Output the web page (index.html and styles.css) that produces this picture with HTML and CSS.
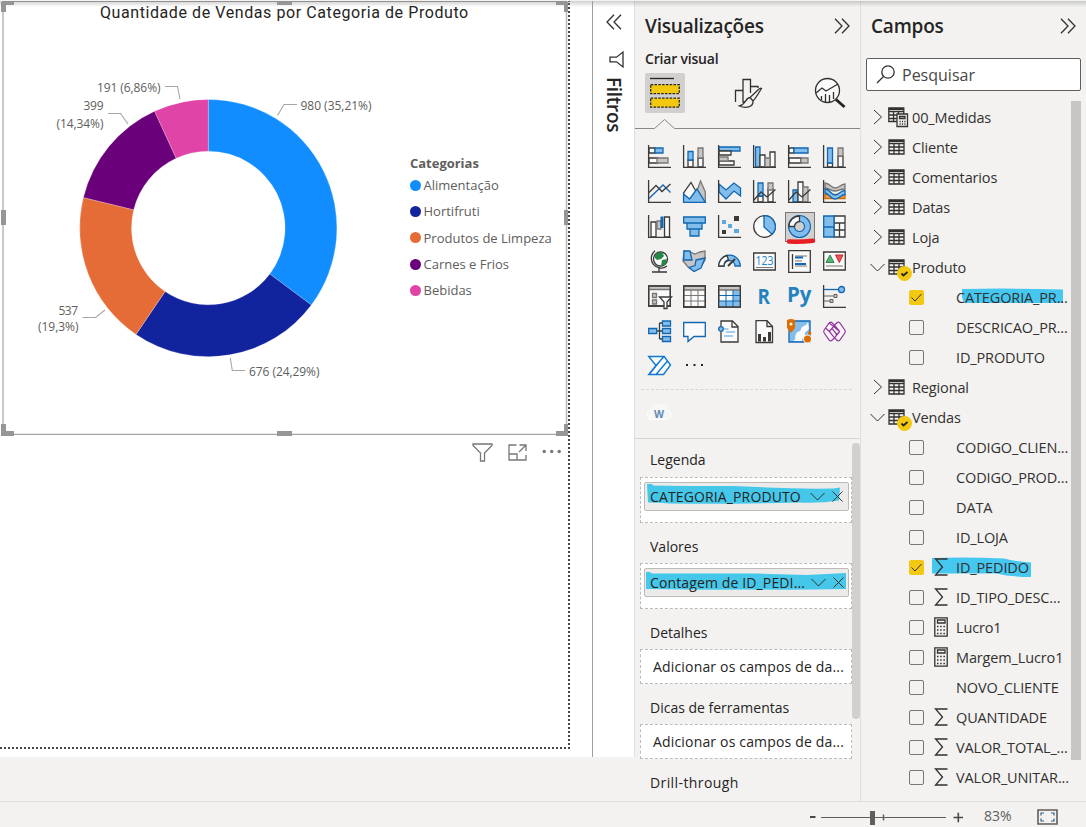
FILE: index.html
```html
<!DOCTYPE html>
<html lang="pt-BR">
<head>
<meta charset="utf-8">
<title>Quantidade de Vendas por Categoria de Produto</title>
<link rel="stylesheet" href="styles.css">
</head>
<body>
<svg class="sprite" aria-hidden="true">
  <symbol id="right" viewBox="0 0 10 16"><path d="M1 1l7.500 7L1 15" class="thin"/></symbol>
  <symbol id="down" viewBox="0 0 15 9"><path d="M.5 1l7 7 7-7" class="thin"/></symbol>
  <symbol id="close" viewBox="0 0 11 11"><path d="M.5.5l10 10M10.500.5l-10 10" class="thin"/></symbol>
  <symbol id="dbl" viewBox="0 0 16 16"><path d="M1 .7l7 7.300-7 7.300M8 .7l7 7.300-7 7.300" class="mid"/></symbol>
  <symbol id="table" viewBox="0 0 17 16"><path d="M1 1h15v14H1zM1 4.500h15M1 8h15M1 11.500h15M6 4.500V15M11 4.500V15" class="mid"/><path d="M1 2h15" class="heavy"/></symbol>
  <symbol id="sigma" viewBox="0 0 14 18"><path d="M13.500 1H1.500l7 8-7 8h12" class="mid"/></symbol>
  <symbol id="calc" viewBox="0 0 14 20"><path d="M.8.8h12.400v18.400H.8zM3.500 3h7.500v3h-7.500z" class="mid"/><path d="M3 9.500h8.500M3 13h8.500M3 16.500h8.500" class="mid" stroke-dasharray="1.500 1.700"/></symbol>
  <symbol id="check" viewBox="0 0 15 15"><path d="M2.500 7.500l3.500 3.500 6.500-7" class="thin"/></symbol>
</svg>

<div class="app">
  <main class="canvas">
    <section class="page">
      <article class="visual">
        <h1 class="visual-title">Quantidade de Vendas por Categoria de Produto</h1>
        <svg class="donut" viewBox="0 24 400 400" width="400" height="400">
          <g stroke="#fff" stroke-opacity=".45" stroke-width=".5">
          <path fill="#118dff" d="M208.300 99.400A128.600 128.600 0 0 1 311.300 305L269.800 274A76.800 76.800 0 0 0 208.300 151.200z"/>
          <path fill="#12239e" d="M311.300 305A128.600 128.600 0 0 1 136 334.400L165.100 291.500A76.800 76.800 0 0 0 269.800 274z"/>
          <path fill="#e66c37" d="M136 334.400A128.600 128.600 0 0 1 83.400 197.600L133.700 209.800A76.800 76.800 0 0 0 165.100 291.500z"/>
          <path fill="#6b007b" d="M83.400 197.600A128.600 128.600 0 0 1 154.600 111.200L176.200 158.200A76.800 76.800 0 0 0 133.700 209.800z"/>
          <path fill="#e044a7" d="M154.600 111.200A128.600 128.600 0 0 1 208.300 99.400V151.200A76.800 76.800 0 0 0 176.200 158.200z"/>
          </g>
          <path class="leader" d="M165 86.500h12.500L180 99M108 113.500h12.500l7.500 10.500M277.500 115.500l6.500-11h13M82.500 317.500h13l9.500-7.500M230.300 358l2 12.500H245"/>
          <g class="data-label">
            <text x="97" y="92" textLength="63.500">191 (6,86%)</text>
            <text x="83.500" y="110" textLength="20">399</text>
            <text x="56.500" y="127.500" textLength="47">(14,34%)</text>
            <text x="300.500" y="110" textLength="71">980 (35,21%)</text>
            <text x="58.500" y="315" textLength="19.500">537</text>
            <text x="38" y="331" textLength="40.500">(19,3%)</text>
            <text x="249" y="376" textLength="70.500">676 (24,29%)</text>
          </g>
        </svg>
        <div class="legend">
          <h2>Categorias</h2>
          <ul>
            <li><i class="c1"></i><span>Alimentação</span></li>
            <li><i class="c2"></i><span>Hortifruti</span></li>
            <li><i class="c3"></i><span>Produtos de Limpeza</span></li>
            <li><i class="c4"></i><span>Carnes e Frios</span></li>
            <li><i class="c5"></i><span>Bebidas</span></li>
          </ul>
        </div>
        <svg class="handles" viewBox="0 0 570 437" width="570" height="437"><path d="M3 1.500V434M566.500 1.500V434" stroke="#b8b8b8" stroke-width="1.500"/><path d="M2 1.500h565M2 434.300h565" stroke="#8f8f8f"/><path fill="#969696" d="M1 2h13v3H6v7H1zM277 2h15v3h-15zM556 2h12v10h-4V5h-8zM1 210h5v15H1zM564 210h4v15h-4zM1 424h5v7h8v5H1zM277 431h15v5h-15zM568 424h-4v7h-8v5h12z"/></svg>
      </article>
      <div class="visual-tools">
        <svg width="21" height="19" viewBox="0 0 21 19"><path d="M1 1h19v1.500l-7.500 7.500v8h-4v-8L1 2.500z"/></svg>
        <svg width="19" height="17" viewBox="0 0 19 17"><path d="M8.500 1H1v15h17v-5M18 7V1h-6.500M18 1l-7 7M1 10h8v6"/></svg>
        <svg class="more" width="20" height="5" viewBox="0 0 20 5"><g fill="#797775" stroke="none"><circle cx="2.200" cy="2.500" r="1.700"/><circle cx="9.700" cy="2.500" r="1.700"/><circle cx="17.200" cy="2.500" r="1.700"/></g></svg>
      </div>
    </section>
  </main>

  <aside class="filters">
    <svg class="flip" width="16" height="16"><use href="#dbl"/></svg>
    <svg class="funnel" width="15" height="17" viewBox="0 0 15 17"><path d="M14 1v15L7.500 10.800H1V6.200h6.500z" class="mid"/></svg>
    <span>Filtros</span>
  </aside>

  <aside class="vis">
    <header><h2>Visualizações</h2><svg width="16" height="16"><use href="#dbl"/></svg></header>
    <h3>Criar visual</h3>
    <div class="tabs">
      <div class="tab active"><svg width="40" height="40" viewBox="0 0 40 40"><path d="M5 5.500h24" stroke="#252423" stroke-width="1.300"/><g fill="#f2c811" stroke="#252423" stroke-width="1.300" stroke-dasharray="2.500 1.300"><path d="M5.700 11.700h28.600v9H5.700zM5.700 25.200h28.600v9H5.700z"/></g></svg></div>
      <div class="tab"><svg width="40" height="40" viewBox="0 0 40 40"><g class="mid"><path d="M8.500 29V17.500H16M23.500 20V6.500H16V29h3M23.500 13.500h7.500v1.500"/><path fill="#f3f2f1" d="M34.500 15.500q-1-1-3 1L23 24.500l3 3.500q1.500-1 8.500-12.500zM23 24.500c-4.500 0-4 7-10.500 8.500 6 2.500 14 1.500 13.500-5z"/></g></svg></div>
      <div class="tab"><svg width="40" height="40" viewBox="0 0 40 40"><g class="mid"><circle cx="18.500" cy="17.500" r="12" fill="#fafafa"/><path d="M7 20l6-5 4 3L29 11M12.500 23v4M16.500 21v8M20.500 22v7M24.500 19v7"/></g><path d="M27 26.500l8.500 7.500" stroke="#252423" stroke-width="3"/></svg></div>
    </div>
    <svg class="notch" width="225" height="10" viewBox="0 0 225 10"><path d="M0 9.500h19.500l10-9 10 9H225"/></svg>

    <div class="gallery">
      <svg viewBox="0 0 23 23"><path class="w" d="M1 3h6v5H1zM1 13h9v5H1z"/><path class="b" d="M7 3h8v5H7z"/><path class="g" d="M9 13h11v5H9z"/><path class="ax" d="M.6 0v22.400H23"/></svg>
      <svg viewBox="0 0 23 23"><path class="w" d="M5 15h5v7H5zM15 13h5v9h-5z"/><path class="b" d="M5 6.500h5V15H5z"/><path class="g" d="M15 3h5v10h-5z"/><path class="ax" d="M.6 0v22.400H23"/></svg>
      <svg viewBox="0 0 23 23"><path class="b" d="M1 2h21v4H1z"/><path class="w" d="M1 6h12v4H1zM1 16h15v4H1z"/><path class="g" d="M1 12h9v4H1z"/><path class="ax" d="M.6 0v22.400H23"/></svg>
      <svg viewBox="0 0 23 23"><path class="b" d="M2.500 2H7v20H2.500z"/><path class="w" d="M7 10h5v12H7zM17 7h5v15h-5z"/><path class="g" d="M12 13h5v9h-5z"/><path class="ax" d="M.6 0v22.400H23"/></svg>
      <svg viewBox="0 0 23 23"><path class="w" d="M1 3h5v5H1zM1 13h12v5H1z"/><path class="b" d="M6 3h14v5H6z"/><path class="g" d="M13 13h7v5h-7z"/><path class="ax" d="M.6 0v22.400H23"/></svg>
      <svg viewBox="0 0 23 23"><path class="w" d="M4.500 18h5v4h-5zM15 11h5v11h-5z"/><path class="b" d="M4.500 3h5v15h-5z"/><path class="g" d="M15 3h5v8h-5z"/><path class="ax" d="M.6 0v22.400H23"/></svg>

      <svg viewBox="0 0 23 23"><path class="bl" d="M1 18.500L15 5l7.500 7.500"/><path class="kl" d="M1 12.500l7-7 6 6 8.500-7.500"/><path class="ax" d="M.6 0v22.400H23"/></svg>
      <svg viewBox="0 0 23 23"><path class="g" d="M17.500 1L22.300 12v10H10z"/><path class="w" d="M8 2.500l11 19.500H.6V13z"/><path class="b" d="M.6 14l6 5L14 9l8.300 13.300H.6z"/></svg>
      <svg viewBox="0 0 23 23"><path class="b" d="M1 4l7 6 8-7 6.500 5v8L16 11l-8 8-7-7z"/><path class="ax" d="M.6 0v22.400H23"/></svg>
      <svg viewBox="0 0 23 23"><path class="w" d="M5 16h5v6H5zM15 9h5v13h-5z"/><path class="b" d="M5 3h5v13H5z"/><path class="g" d="M15 3h5v7h-5z"/><path class="kl" d="M1 20l7-8 6 5 8.500-7.500"/><path class="ax" d="M.6 0v22.400H23"/></svg>
      <svg viewBox="0 0 23 23"><path class="b" d="M5 10h5v12H5z"/><path class="w" d="M10 2h5v20h-5z"/><path class="g" d="M15 7h5v15h-5z"/><path class="kl" d="M1 20l7-8 6 5 8.500-7.500"/><path class="ax" d="M.6 0v22.400H23"/></svg>
      <svg viewBox="0 0 23 23"><path class="g" d="M2 3c6 1 6 5 10 5s4-3 10-4v5c-6 0-6 2-10 2S8 9 2 8z"/><path fill="#f7a04a" stroke="#d06a00" stroke-width="1.300" d="M2 14.500h20V18.500H2z"/><path class="b" d="M2 9c5 0 6 6 10 6s5-4.500 10-4.500v4c-4 0-5 4.500-10 4.500S6 13 2 13z"/><path class="ax" d="M.6 0v22.400H23"/></svg>

      <svg viewBox="0 0 23 23"><path class="w" d="M3 7h5v15H3zM16.500 2h5v20h-5z"/><path class="g" d="M9 6h4v8H9z"/><path fill="#1167b1" d="M12.500 1.500h3V13h-3z"/><path class="ax" d="M.6 0v22.400H23"/></svg>
      <svg viewBox="0 0 23 23"><path class="b" d="M.7 2h21.600v6H.7zM4 8h15v6H4zM7 14h9v7H7z"/></svg>
      <svg viewBox="0 0 23 23"><path fill="#3b3a39" d="M16 1h5v5h-5zM4 15h4v4H4z"/><path fill="#61a8df" d="M4 5h4v4H4zM10 9h4v4h-4zM16 14h5v4h-5z"/><path class="ax" d="M.6 0v22.400H23"/></svg>
      <svg viewBox="0 0 23 23"><circle class="w" cx="11.500" cy="11.500" r="10.800"/><path class="b" d="M11 .7a10.800 10.800 0 0 1 8 18.500L11 12z"/></svg>
      <div class="selected"><svg viewBox="0 0 23 23"><circle cx="11.500" cy="11.500" r="8" fill="none" stroke="#1167b1" stroke-width="7"/><circle cx="11.500" cy="11.500" r="8" fill="none" stroke="#83bdec" stroke-width="4.800"/><path d="M1 11.500A10.500 10.500 0 0 1 11.500 1v5.500a5 5 0 0 0-5 5z" class="w"/></svg><svg class="scribble" width="30" height="6" viewBox="0 0 30 6"><path d="M3 3.500q12 .5 24-.7" stroke="#e81c23" stroke-width="4.500" stroke-linecap="round" fill="none"/></svg></div>
      <svg viewBox="0 0 23 23"><path class="w" d="M11 1h11v21H11zM11 8h11M16.500 8v14M11 15h5.500M16.500 15H22"/><path class="b" d="M.7 1H11v11H.7zM.7 12H11v10H.7z"/></svg>

      <svg viewBox="0 0 23 23"><circle class="w" cx="12.500" cy="9" r="7"/><path fill="#238b45" d="M9 3l5-1 2 4-3 3-4 1-3-3zM14 10l5-1-2 6-4 1z"/><path class="kl" d="M7 .8A9.500 9.500 0 1 0 19 16M11 18v4M4 22h15"/></svg>
      <svg viewBox="0 0 23 23"><path class="g" d="M1 1l6 1 5 2 5-2 5-1v9l-5 8-6 3-6-4-5-6z"/><path class="b" d="M1 1h6l2 9H.7zM13 10l9-2-4 10-7 3.500-5-4 6-2z"/></svg>
      <svg viewBox="0 0 23 23"><path class="b" d="M.7 16a10.800 10.800 0 0 1 21.600 0H17a5.500 5.500 0 0 0-11 0z"/><path class="w" d="M.7 16A10.800 10.800 0 0 1 9 5.500L10.500 10Q6 11 6 16z"/><path d="M10 16l7-7" stroke="#3b3a39" stroke-width="2"/></svg>
      <svg viewBox="0 0 23 23"><path class="w" d="M.7 3h21.600v17H.7z"/><path stroke="#797775" d="M3 17.500h17"/><text x="2.500" y="14.500" textLength="18" lengthAdjust="spacingAndGlyphs" class="digits">123</text></svg>
      <svg viewBox="0 0 23 23"><path class="w" d="M.7.7h21.600v21.600H.7z"/><path class="kl" d="M4.500 4v15"/><path stroke="#797775" d="M7 6h12M7 11h7M7 16h12"/><path stroke="#1167b1" stroke-width="2" d="M7 7.500h8M7 14h11"/></svg>
      <svg viewBox="0 0 23 23"><path class="w" d="M.7 2h21.600v18H.7z"/><path fill="#5bb174" stroke="#238b45" d="M3 12.500l4-7.500 4 7.500z"/><path fill="#e85555" stroke="#c9252d" d="M12.500 5H20l-3.700 7.500z"/><path stroke="#797775" d="M3 16h17"/></svg>

      <svg viewBox="0 0 23 23"><path class="w" d="M.7 1h21.600v20H.7z"/><path class="g" d="M.7 1h21.600v3.500H.7zM4.500 8.500h4v4h-4zM4.500 15h4v4h-4z"/><path class="kl" d="M.7 1h21.600v20H.7z"/><path class="w" d="M11.500 12h12l-4.500 5v6.500h-3V17z"/></svg>
      <svg viewBox="0 0 23 23"><path class="w" d="M.7 1h21.600v21H.7z"/><path class="g" d="M.7 1h21.600v4H.7z"/><path stroke="#797775" d="M1 10.500h21M1 16h21M8 5v17M15 5v17"/><path class="kl" d="M.7 1h21.600v21H.7z"/></svg>
      <svg viewBox="0 0 23 23"><path class="w" d="M.7 1h21.600v21H.7z"/><path fill="#83bdec" d="M15 5h7v17H1v-6h14z"/><path class="g" d="M.7 1h21.600v4H.7z"/><path stroke="#1167b1" d="M1 10.500h21M1 16h21M8 5v17M15 5v17"/><path class="kl" d="M.7 1h21.600v21H.7z"/></svg>
      <svg viewBox="0 0 23 23"><text x="4.500" y="18.500" class="letters" font-size="20.500" textLength="12.500" lengthAdjust="spacingAndGlyphs">R</text></svg>
      <svg viewBox="0 0 23 23"><text x="-1" y="16.500" class="letters" font-size="21" textLength="24.500" lengthAdjust="spacingAndGlyphs">Py</text></svg>
      <svg viewBox="0 0 23 23"><path class="ax" d="M.6 0v22.400H23"/><path class="bl" d="M1 4.500h14"/><circle class="b" cx="18.500" cy="4.500" r="3"/><path stroke="#605e5c" fill="#c8c6c4" d="M1 11h10m0-1.500h3v3h-3zM1 16h6m0-1.500h3v3H7z"/></svg>

      <svg viewBox="0 0 23 23"><path class="kl" stroke-width="1.600" d="M8 11h7M11.500 3v16M11.500 3H15M11.500 19H15"/><path class="b" d="M.7 8.500h8v5h-8zM14.500 1h8v5h-8zM14.500 8.500h8v5h-8zM14.500 16.500h8v5h-8z"/></svg>
      <svg viewBox="0 0 23 23"><path fill="#fafafa" stroke="#1167b1" stroke-width="1.300" d="M.7 2.500h21.600v14H11l-6 5v-5H.7z"/></svg>
      <svg viewBox="0 0 23 23"><path class="w" d="M3 6V1h11.500L20 6.500V22H3V12"/><path class="kl" d="M14 1v6h6"/><circle class="b" cx="3" cy="9" r="2.300"/><path d="M5.500 9h5M8 12h9M6 16h9" stroke="#4a9fdd" stroke-width="1.200"/></svg>
      <svg viewBox="0 0 23 23"><path class="w" d="M3 .7h11l5.500 5.800v16H3z"/><path class="kl" d="M14 1v5.500h5.500"/><path d="M6.500 14v7.500M11.500 17v4.500M16.500 12v9.500" stroke="#3b3a39" stroke-width="3"/></svg>
      <svg viewBox="0 0 23 23"><path class="b" d="M4 1h18v21H1V9z"/><path fill="#fafafa" d="M20 2c-2 5-6 3-7 7s-3 1-5 5 1 5-3 7h9c0-5 4-2 3-6s4-4 4-7z"/><path fill="#e06c00" d="M-1 0q4-2 8 0v8L3 13l-4-5z"/><circle cx="3" cy="4" r="1.500" fill="#fff"/><circle cx="19.500" cy="19" r="4.500" fill="#f3f2f1"/><circle cx="19.500" cy="19" r="3.500" fill="#e06c00"/><circle cx="21.500" cy="13" r="1.800" fill="#e06c00"/></svg>
      <svg viewBox="0 0 23 23"><path d="M5.800 3.300Q7.500 1 9.300 3l2.200 2.200L13.700 3q1.800-2 3.500.3l4.600 6.700q1 1.500 0 3l-4.600 6.700q-1.700 2.300-3.500.3l-2.200-2.200L9.300 20q-1.800 2-3.500-.3L1.200 13q-1-1.500 0-3zM11.500 5.200L6.300 11.500l5.200 6.300 5.200-6.300zM6.300 11.500L2.500 8M16.700 11.500l-3.800 4M6.300 3l10.400 8.500M9 8.300l5 6.500" fill="#faf6fa" stroke="#92349c" stroke-width="1.200"/></svg>

      <svg viewBox="0 0 23 23"><path d="M.7 1.500h15.500l6.300 8.500-7 9.500H.7L8 10.500zM8 10.500L16 1.500M8 19.500L19.500 6M1.500 19L12 6" fill="#fafafa" stroke="#0f78d4" stroke-width="1.400"/></svg>
      <svg viewBox="0 0 23 23"><path fill="#252423" d="M3 9h2v2H3zM10.500 9h2v2h-2zM18 9h2v2h-2z"/></svg>
    </div>
    <div class="custom"><svg width="24" height="17" viewBox="0 0 24 17"><path fill="#f6f6f6" stroke="#fff" d="M5 15.500a5 5 0 0 1 0-10C7-1 18-1 19 5.500a5 5 0 0 1 0 10z"/><text x="7" y="13.500" textLength="10" lengthAdjust="spacingAndGlyphs" class="w-mark">W</text></svg></div>

    <div class="wells">
      <div class="well-list">
        <h4 class="first">Legenda</h4>
        <div class="well filled"><div class="pill"><svg class="marker" width="205" height="29" viewBox="0 0 205 29"><path fill="#45c7e9" d="M3 2h5l1 1.500q30 .5 80 .5l35 1.500q30 1.500 65 1l7-1-1 13q-18 3-40 2-70 2-130 1-10-1-21-1z"/></svg><span>CATEGORIA_PRODUTO</span><svg width="15" height="9"><use href="#down"/></svg><svg width="11" height="11"><use href="#close"/></svg></div></div>
        <h4>Valores</h4>
        <div class="well filled"><div class="pill"><svg class="marker" width="205" height="29" viewBox="0 0 205 29"><path fill="#45c7e9" d="M2 4h4l2 1.500h105l50 1.500 39-2v16q-50 1-100 .5-40 .5-100-.5z"/></svg><span class="count">Contagem de ID_PEDI...</span><svg width="15" height="9"><use href="#down"/></svg><svg width="11" height="11"><use href="#close"/></svg></div></div>
        <h4>Detalhes</h4>
        <div class="well empty">Adicionar os campos de da...</div>
        <h4>Dicas de ferramentas</h4>
        <div class="well empty">Adicionar os campos de da...</div>
        <h4 class="drill">Drill-through</h4>
      </div>
      <div class="vis-scroll"></div>
    </div>
  </aside>

  <aside class="fields">
    <header><h2>Campos</h2><svg width="16" height="16"><use href="#dbl"/></svg></header>
    <div class="search"><svg width="19" height="19" viewBox="0 0 19 19"><circle cx="12" cy="7" r="6.200" class="mid"/><path d="M7.500 11.500L1 18" class="mid"/></svg><span>Pesquisar</span></div>
    <div class="tree-wrap">
    <ul class="tree">
      <li class="t"><svg class="ch"><use href="#right"/></svg><svg class="mt" viewBox="0 0 20 20"><path d="M.8 1h15v13.500h-15zM.8 4.500h15M.8 8h15M.8 11.500h8M5.500 4v10M10.500 4v4" class="mid"/><path d="M.8 2h15" class="heavy"/><path d="M9 7h10.500v12.500H9z" fill="#f3f2f1" class="calc-mini"/><path d="M11.500 9.500h5.500v2h-5.500z" class="mid"/><path d="M11.500 14.500H18M11.500 17H18" class="mid" stroke-dasharray="1.200 1.200"/></svg><span>00_Medidas</span></li>
      <li class="t"><svg class="ch"><use href="#right"/></svg><svg class="tb"><use href="#table"/></svg><span>Cliente</span></li>
      <li class="t"><svg class="ch"><use href="#right"/></svg><svg class="tb"><use href="#table"/></svg><span>Comentarios</span></li>
      <li class="t"><svg class="ch"><use href="#right"/></svg><svg class="tb"><use href="#table"/></svg><span>Datas</span></li>
      <li class="t"><svg class="ch"><use href="#right"/></svg><svg class="tb"><use href="#table"/></svg><span>Loja</span></li>
      <li class="t open"><svg class="ch"><use href="#down"/></svg><svg class="tb"><use href="#table"/></svg><b class="badge"><svg width="15" height="15" viewBox="0 0 15 15"><path d="M4.500 7.500l2 2 4-3.500" fill="none" stroke="#252423" stroke-width="1.800"/></svg></b><span>Produto</span></li>
      <li class="f"><i class="box on"><svg><use href="#check"/></svg></i><em></em><span>CATEGORIA_PR...</span><svg class="hl cat" viewBox="0 0 102 16" width="102" height="16"><path d="M0 1q50-1 101 .5V15H5q-4 0-5-6z" fill="#45c7f0"/></svg></li>
      <li class="f"><i class="box"></i><em></em><span>DESCRICAO_PR...</span></li>
      <li class="f"><i class="box"></i><em></em><span>ID_PRODUTO</span></li>
      <li class="t"><svg class="ch"><use href="#right"/></svg><svg class="tb"><use href="#table"/></svg><span>Regional</span></li>
      <li class="t open"><svg class="ch"><use href="#down"/></svg><svg class="tb"><use href="#table"/></svg><b class="badge"><svg width="15" height="15" viewBox="0 0 15 15"><path d="M4.500 7.500l2 2 4-3.500" fill="none" stroke="#252423" stroke-width="1.800"/></svg></b><span>Vendas</span></li>
      <li class="f"><i class="box"></i><em></em><span>CODIGO_CLIEN...</span></li>
      <li class="f"><i class="box"></i><em></em><span>CODIGO_PROD...</span></li>
      <li class="f"><i class="box"></i><em></em><span>DATA</span></li>
      <li class="f"><i class="box"></i><em></em><span>ID_LOJA</span></li>
      <li class="f"><i class="box on"><svg><use href="#check"/></svg></i><em><svg class="sg"><use href="#sigma"/></svg></em><span>ID_PEDIDO</span><svg class="hl ped" viewBox="0 0 100 21" width="100" height="21"><path d="M0 1q35-1 72 .5 10 3 27 4V20q-20 0-35-3.500H0z" fill="#45c7f0"/></svg></li>
      <li class="f"><i class="box"></i><em><svg class="sg"><use href="#sigma"/></svg></em><span>ID_TIPO_DESC...</span></li>
      <li class="f"><i class="box"></i><em><svg class="cl"><use href="#calc"/></svg></em><span>Lucro1</span></li>
      <li class="f"><i class="box"></i><em><svg class="cl"><use href="#calc"/></svg></em><span>Margem_Lucro1</span></li>
      <li class="f"><i class="box"></i><em></em><span>NOVO_CLIENTE</span></li>
      <li class="f"><i class="box"></i><em><svg class="sg"><use href="#sigma"/></svg></em><span>QUANTIDADE</span></li>
      <li class="f"><i class="box"></i><em><svg class="sg"><use href="#sigma"/></svg></em><span>VALOR_TOTAL_...</span></li>
      <li class="f"><i class="box"></i><em><svg class="sg"><use href="#sigma"/></svg></em><span>VALOR_UNITAR...</span></li>
    </ul>
    <div class="fields-scroll"></div>
    </div>
  </aside>
</div>
<footer class="status">
  <svg class="slider" width="155" height="25" viewBox="0 0 155 25"><path d="M0 15h5.500" stroke="#494847" stroke-width="2"/><path d="M11 15.500h125" stroke="#605e5c"/><path d="M60 9h5v14h-5z" fill="#605e5c"/><path d="M73.500 12.500v6" stroke="#605e5c" stroke-width="1.500"/><path d="M143.500 15.500h9.500M148.300 10.700v9.600" stroke="#494847" stroke-width="1.600"/></svg>
  <span>83%</span>
  <svg class="fit" width="21" height="16" viewBox="0 0 21 16"><path d="M1 1h19v14H1z" fill="none" stroke="#605e5c" stroke-width="1.600"/><path d="M4 6.500V4h3M14 4h3v2.500M17 9.500V12h-3M7 12H4V9.500" fill="none" stroke="#34618b" stroke-width="1.200"/></svg>
</footer>
<div class="top-shade"></div>
</body>
</html>
```

FILE: styles.css
```css
* { box-sizing: border-box; }
body {
  margin: 0; width: 1086px; height: 827px; overflow: hidden; position: relative;
  background: #f3f2f1; color: #252423;
  font: 15px/20px "Open Sans", "Noto Sans", sans-serif;
}
h1, h2, h3, h4, ul { margin: 0; padding: 0; font-weight: 400; list-style: none; }
svg { display: block; flex: none; overflow: visible; }
.sprite { position: absolute; width: 0; height: 0; }
.thin { fill: none; stroke: #323130; stroke-width: 1; }
.mid { fill: none; stroke: #323130; stroke-width: 1.3; }
.heavy { fill: none; stroke: #323130; stroke-width: 2; }
.top-shade {
  position: absolute; left: 0; top: 0; width: 1086px; height: 7px; pointer-events: none;
  background: linear-gradient(#f3f2f1 0 1px, rgba(150,150,150,.45) 1px, rgba(180,180,180,0) 7px);
}
.app { display: grid; grid-template-columns: 592px 43px 226px 225px; height: 801px; }

.canvas { height: 757px; background: #fff; }
.page { width: 570px; height: 749px; border: dotted #444; border-width: 0 2px 2px 0; }
.visual { position: relative; height: 437px; display: grid; grid-template: 24px 1fr / 400px 1fr; }
.visual-title {
  grid-column: 1 / 3; padding-left: 100px; font: 16px/26px Roboto, sans-serif;
  letter-spacing: .58px; white-space: nowrap;
}
.leader { fill: none; stroke: #a6a6a6; stroke-width: 1.1; }
.data-label { font-size: 12px; fill: #605e5c; }
.legend { padding: 129px 0 0 10px; color: #605e5c; font-size: 13px; }
.legend h2 { font-size: 13px; font-weight: 700; line-height: 20px; letter-spacing: -.02px; margin-bottom: -1px; }
.legend li { display: flex; align-items: center; gap: 2.500px; height: 26.300px; white-space: nowrap; }
.legend i { width: 11px; height: 11px; border-radius: 50%; }
.c1 { background: #118dff; }
.c2 { background: #12239e; }
.c3 { background: #e66c37; }
.c4 { background: #6b007b; }
.c5 { background: #e044a7; }
.handles { position: absolute; left: 0; top: 0; }
.visual-tools { display: flex; justify-content: flex-end; align-items: center; gap: 15px; height: 31px; padding-right: 6px; }
.visual-tools svg { fill: none; stroke: #797775; stroke-width: 1.3; }
.visual-tools .more { margin-bottom: 3px; }

.filters { height: 757px; background: #fff; border-left: 1px solid #a19f9d; border-right: 1px solid #e1dfdd; padding-top: 14px; display: flex; flex-direction: column; align-items: center; }
.flip { transform: scaleX(-1); }
.funnel { margin: 21px 0 9px 6px; }
.filters span { writing-mode: vertical-rl; font-weight: 600; font-size: 19px; line-height: 22px; letter-spacing: -.3px; }

.vis, .fields { border-right: 1px solid #e1dfdd; min-width: 0; overflow: hidden; }
.vis { height: 801px; display: flex; flex-direction: column; }
header { height: 46px; display: flex; justify-content: space-between; align-items: center; padding: 6px 10px 0; }
header h2 { font-size: 19px; font-weight: 600; line-height: 26px; letter-spacing: -.2px; }
.vis h3 { height: 27px; padding: 3px 10px 0; font-size: 14px; font-weight: 600; letter-spacing: -.2px; }
.tabs { display: flex; gap: 42px; padding-left: 10px; }
.tab { width: 40px; height: 40px; border-radius: 2px; }
.active { background: #d2d0ce; }
.notch { margin-top: 6px; fill: #f3f2f1; stroke: #8a8886; }
.gallery { display: grid; grid-template-columns: repeat(6, 35px); grid-auto-rows: 35px; padding: 16px 0 0 13px; height: 260px; }
.gallery svg { width: 23px; height: 23px; fill: none; }
.gallery .w { fill: #fafafa; stroke: #3b3a39; stroke-width: 1.3; }
.gallery .b { fill: #83bdec; stroke: #1167b1; stroke-width: 1.3; }
.gallery .g { fill: #c8c6c4; stroke: #797775; stroke-width: 1.3; }
.ax, .kl { fill: none; stroke: #3b3a39; stroke-width: 1.3; }
.bl { fill: none; stroke: #1167b1; stroke-width: 1.3; }
.digits { font-size: 12px; fill: #1b83cc; }
.letters { font-weight: 700; fill: #2482c0; }
.selected { position: relative; width: 30px; height: 30px; margin: -3px; padding: 2px; border: 1px solid #797775; background: #d2d0ce; }
.gallery .scribble { position: absolute; left: 0; top: 25px; width: 30px; height: 6px; }
.custom { height: 49px; margin: 0 8px 0 6px; border-top: 1px dashed #d8d6d4; padding: 14px 0 0 6px; }
.w-mark { font-size: 11px; font-weight: 700; fill: #648bb7; }
.wells { border-top: 1px solid #d8d6d4; flex: 1; min-height: 0; display: flex; }
.well-list { width: 217px; padding-left: 5px; font-size: 14px; }
.wells h4 { height: 40px; padding: 14px 0 0 10px; letter-spacing: 0; white-space: nowrap; }
.wells .first { height: 38px; padding-top: 11px; }
.wells .drill { letter-spacing: .4px; }
.well { width: 212px; border: 1px dashed #bdbbb9; background: #fff; white-space: nowrap; }
.filled { height: 46px; padding: 4px 3px; }
.pill { position: relative; display: flex; align-items: center; height: 29px; width: 205px; border: 1px solid #bdbbb9; border-radius: 2px; background: #edebe9; padding: 0 5px; gap: 9px; }
.pill span { position: relative; width: 152px; letter-spacing: .13px; }
.pill span + svg { position: relative; }
.pill svg:last-child { position: relative; margin-left: -2px; }
.pill .marker { position: absolute; left: -1px; top: -1px; }
.empty { height: 35px; line-height: 33px; padding-left: 12px; letter-spacing: .17px; }
.vis-scroll { width: 8px; height: 276px; margin-top: 4px; background: #d2d0ce; border-radius: 4px; }

.fields { border-right: 0; }
.fields header { padding-right: 10px; }
.search { display: flex; align-items: center; gap: 7px; width: 215px; height: 33px; margin: 12px 0 0 5px; padding-left: 9px; border: 1px solid #605e5c; border-radius: 2px; background: #fff; font-size: 16px; color: #484644; }
.search span { padding-top: 1px; }
.tree-wrap { display: flex; margin-top: 10px; }
.tree { width: 210px; padding-top: 1px; }
.tree li { position: relative; height: 30px; display: flex; align-items: center; white-space: nowrap; font-size: 14.500px; color: #323130; }
.tree span { position: relative; z-index: 1; padding-top: 2px; letter-spacing: -.14px; }
.t { padding-left: 12px; }
.ch { width: 10px; height: 16px; margin-right: 5px; }
.open { padding-left: 9px; }
.open .ch { width: 15px; height: 9px; margin-right: 3px; }
.tb { width: 17px; height: 16px; margin-right: 7px; }
.mt { width: 20px; height: 20px; margin-right: 4px; }
.badge { position: absolute; left: 36px; top: 14px; width: 15px; height: 15px; border-radius: 50%; background: #f2c811; z-index: 2; }
.f { padding-left: 48px; }
.box { width: 15px; height: 15px; border: 1px solid #797775; border-radius: 2px; flex: none; }
.on { background: #f2c811; border-color: #f2c811; }
.on svg { width: 15px; height: 15px; margin: -1px; }
.f em { position: relative; z-index: 1; width: 32px; height: 20px; padding-left: 9.500px; display: flex; align-items: center; }
.sg { width: 14px; height: 18px; }
.cl { width: 14px; height: 20px; }
.calc-mini { stroke: #323130; stroke-width: 1.3; }
.hl { position: absolute; }
.cat { left: 101px; top: 6px; }
.ped { left: 71px; top: 5px; }
.fields-scroll { width: 10px; height: 659px; background: #c8c6c4; }

.status { height: 26px; border-top: 1px solid #e1dfdd; display: flex; align-items: center; padding: 4px 0 0 810px; color: #605e5c; font-size: 14px; }
.slider { margin-top: -5px; }
.status span { width: 53px; padding: 0 0 2px 19px; letter-spacing: 0; box-sizing: content-box; }
.fit { margin-left: 0; }
```
